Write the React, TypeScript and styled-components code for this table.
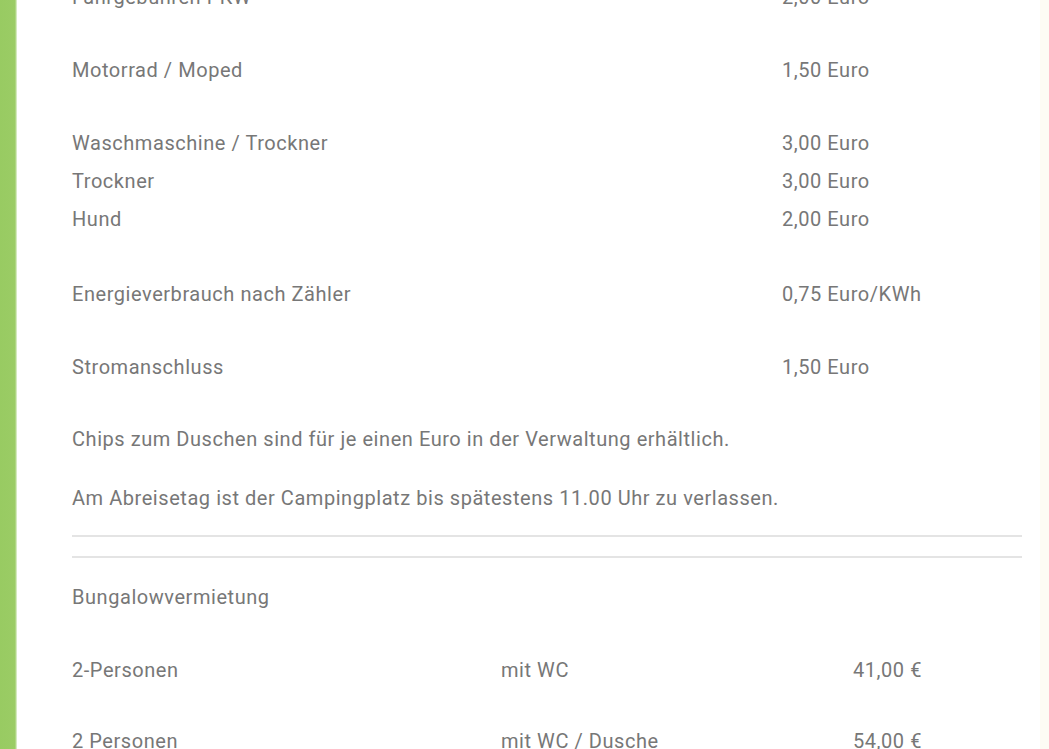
import React from "react";
import styled, { createGlobalStyle } from "styled-components";

const GlobalStyle = createGlobalStyle`
  html, body {
    margin: 0;
    padding: 0;
    background: #ffffff;
    overflow: hidden;
  }
  body {
    font-family: Roboto, "Noto Sans", "Liberation Sans", sans-serif;
  }
`;

const Page = styled.div`
  display: flex;
  width: 1049px;
  height: 749px;
  overflow: hidden;
`;

const SideBar = styled.div`
  flex: 0 0 17px;
  background: linear-gradient(to right, #98cb62 0, #9bcc65 15px, #e8f4dc 17px);
`;

const Edge = styled.div`
  flex: 0 0 9px;
  background: #fdfcf4;
`;

const Main = styled.main`
  flex: 1;
  padding: 0 18px 0 55px;
  margin-top: -22px;
  color: #777777;
  font-size: 20px;
  letter-spacing: 0.55px;
`;

const Group = styled.div<{ $gap?: number }>`
  margin-bottom: ${(p) => (p.$gap ?? 35)}px;
`;

const Row = styled.div`
  display: grid;
  grid-template-columns: 710px 1fr;
  height: 38px;
  align-items: center;
  white-space: nowrap;
`;

const Note = styled.p<{ $gap: number }>`
  margin: 0 0 ${(p) => p.$gap}px;
  line-height: 38px;
  white-space: nowrap;
`;

const Rule = styled.hr<{ $gap: number }>`
  border: 0;
  height: 2px;
  background: #e4e4e4;
  margin: 0 0 ${(p) => p.$gap}px;
`;

const Heading = styled.div`
  height: 38px;
  line-height: 38px;
  margin-bottom: 35px;
`;

const BungalowRow = styled.div<{ $gap?: number }>`
  display: grid;
  grid-template-columns: 429px 352px 1fr;
  height: 38px;
  align-items: center;
  white-space: nowrap;
  margin-bottom: ${(p) => (p.$gap ?? 0)}px;
`;

const fees: { items: [string, string][]; gap?: number }[] = [
  { items: [["Fahrgebühren PKW", "2,00 Euro"]] },
  { items: [["Motorrad / Moped", "1,50 Euro"]] },
  {
    items: [
      ["Waschmaschine / Trockner", "3,00 Euro"],
      ["Trockner", "3,00 Euro"],
      ["Hund", "2,00 Euro"],
    ],
    gap: 37,
  },
  { items: [["Energieverbrauch nach Zähler", "0,75 Euro/KWh"]] },
  { items: [["Stromanschluss", "1,50 Euro"]], gap: 34 },
];

const bungalows = [
  { name: "2-Personen", extra: "mit WC", price: "41,00 €" },
  { name: "2 Personen", extra: "mit WC / Dusche", price: "54,00 €" },
];

export default function App() {
  return (
    <>
      <GlobalStyle />
      <Page>
        <SideBar />
        <Main>
          {fees.map((g, i) => (
            <Group key={i} $gap={g.gap}>
              {g.items.map(([label, value]) => (
                <Row key={label}>
                  <span>{label}</span>
                  <span>{value}</span>
                </Row>
              ))}
            </Group>
          ))}
          <Note $gap={21}>
            Chips zum Duschen sind für je einen Euro in der Verwaltung erhältlich.
          </Note>
          <Note $gap={18}>
            Am Abreisetag ist der Campingplatz bis spätestens 11.00 Uhr zu verlassen.
          </Note>
          <Rule $gap={19} />
          <Rule $gap={20} />
          <Heading>Bungalowvermietung</Heading>
          {bungalows.map((b) => (
            <BungalowRow key={b.name} $gap={33}>
              <span>{b.name}</span>
              <span>{b.extra}</span>
              <span>{b.price}</span>
            </BungalowRow>
          ))}
        </Main>
        <Edge />
      </Page>
    </>
  );
}
